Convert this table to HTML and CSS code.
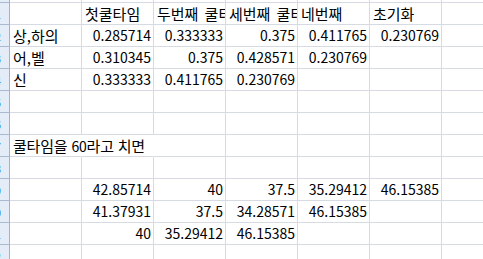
FILE: index.html
```html
<!DOCTYPE html>
<html lang="ko">
<head>
<meta charset="utf-8">
<title>Sheet</title>
<link rel="stylesheet" href="styles.css">
</head>
<body>
<div class="sheet">
  <div class="rh top"></div><div class="c top"></div><div class="c top"></div><div class="c top"></div><div class="c top"></div><div class="c top"></div><div class="c top"></div><div class="c top"></div>

  <div class="rh"><span>1</span></div>
  <div class="c"></div>
  <div class="c k">첫쿨타임</div>
  <div class="c k">두번째 쿨타임</div>
  <div class="c k">세번째 쿨타임</div>
  <div class="c k">네번째</div>
  <div class="c k">초기화</div>
  <div class="c"></div>

  <div class="rh"><span>2</span></div>
  <div class="c k">상,하의</div>
  <div class="c n">0.285714</div>
  <div class="c n">0.333333</div>
  <div class="c n">0.375</div>
  <div class="c n">0.411765</div>
  <div class="c n">0.230769</div>
  <div class="c"></div>

  <div class="rh"><span>3</span></div>
  <div class="c k">어,벨</div>
  <div class="c n">0.310345</div>
  <div class="c n">0.375</div>
  <div class="c n">0.428571</div>
  <div class="c n">0.230769</div>
  <div class="c"></div>
  <div class="c"></div>

  <div class="rh"><span>4</span></div>
  <div class="c k">신</div>
  <div class="c n">0.333333</div>
  <div class="c n">0.411765</div>
  <div class="c n">0.230769</div>
  <div class="c"></div>
  <div class="c"></div>
  <div class="c"></div>

  <div class="rh"><span>5</span></div>
  <div class="c"></div><div class="c"></div><div class="c"></div><div class="c"></div><div class="c"></div><div class="c"></div><div class="c"></div>

  <div class="rh"><span>6</span></div>
  <div class="c"></div><div class="c"></div><div class="c"></div><div class="c"></div><div class="c"></div><div class="c"></div><div class="c"></div>

  <div class="rh"><span>7</span></div>
  <div class="c k ov tight">쿨타임을 <span class="d">60</span>라고 치면</div>
  <div class="c ov"></div>
  <div class="c"></div><div class="c"></div><div class="c"></div><div class="c"></div><div class="c"></div>

  <div class="rh"><span>8</span></div>
  <div class="c"></div><div class="c"></div><div class="c"></div><div class="c"></div><div class="c"></div><div class="c"></div><div class="c"></div>

  <div class="rh"><span>9</span></div>
  <div class="c"></div>
  <div class="c n">42.85714</div>
  <div class="c n">40</div>
  <div class="c n">37.5</div>
  <div class="c n">35.29412</div>
  <div class="c n">46.15385</div>
  <div class="c"></div>

  <div class="rh"><span>10</span></div>
  <div class="c"></div>
  <div class="c n">41.37931</div>
  <div class="c n">37.5</div>
  <div class="c n">34.28571</div>
  <div class="c n">46.15385</div>
  <div class="c"></div>
  <div class="c"></div>

  <div class="rh"><span>11</span></div>
  <div class="c"></div>
  <div class="c n">40</div>
  <div class="c n">35.29412</div>
  <div class="c n">46.15385</div>
  <div class="c"></div>
  <div class="c"></div>
  <div class="c"></div>

  <div class="rh"><span>12</span></div>
  <div class="c"></div><div class="c"></div><div class="c"></div><div class="c"></div><div class="c"></div><div class="c"></div><div class="c"></div>
</div>
</body>
</html>
```

FILE: styles.css
```css
html, body {
  margin: 0;
  padding: 0;
  background: #ffffff;
  overflow: hidden;
}

body {
  font-family: "Noto Sans CJK KR", "Noto Sans", sans-serif;
  font-size: 14px;
  color: #000000;
}

.sheet {
  display: grid;
  grid-template-columns: 10px repeat(7, 72px);
  grid-template-rows: 3px repeat(12, 22px);
  width: 514px;
}

.rh {
  box-sizing: border-box;
  background: #e4ecf7;
  border-right: 1px solid #9fb3cb;
  border-bottom: 1px solid #a9bad0;
  overflow: hidden;
  display: flex;
  justify-content: flex-end;
  align-items: center;
  padding-right: 8px;
  color: #3d8fe0;
  font-size: 11px;
  line-height: 12px;
}

.c {
  box-sizing: border-box;
  border-right: 1px solid #d5dae3;
  border-bottom: 1px solid #d5dae3;
  overflow: hidden;
  white-space: nowrap;
  line-height: 21px;
  padding: 0 2px 0 3px;
}

.k {
  font-size: 15px;
  word-spacing: 2px;
}

.tight {
  word-spacing: 0;
  letter-spacing: -0.2px;
}

.d {
  font-size: 14px;
}

.top {
  line-height: 0;
}

.n {
  text-align: right;
}

.ov {
  overflow: visible;
  border-right-color: transparent;
}
```
